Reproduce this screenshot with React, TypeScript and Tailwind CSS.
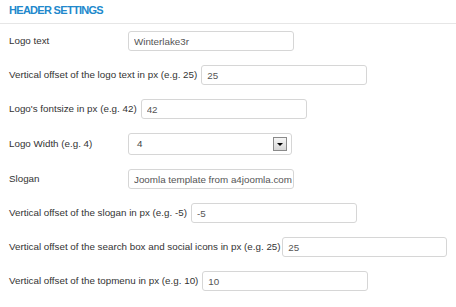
import { ReactNode } from 'react';

type RowProps = {
  label: string;
  tall?: boolean;
  children: ReactNode;
};

function Row({ label, tall, children }: RowProps) {
  return (
    <div className={tall ? 'flex items-center h-[36px]' : 'flex items-center h-[34px]'}>
      <label className="min-w-[115px] mr-[4px] whitespace-nowrap">{label}</label>
      {children}
    </div>
  );
}

function TextInput({ value }: { value: string }) {
  return (
    <input
      type="text"
      defaultValue={value}
      className="w-[166px] h-[20px] border border-[#d6d6d6] rounded-[3px] pl-[5px] pr-[1px] text-[9.8px] text-[#555] bg-white outline-none"
    />
  );
}

function SelectBox({ value }: { value: string }) {
  return (
    <div className="relative w-[164px] h-[22px] border border-[#d6d6d6] rounded-[3px] bg-white flex items-center pl-[8px] text-[9.8px] text-[#444]">
      {value}
      <div className="absolute right-[4px] top-[3px] w-[14px] h-[14px] border border-[#8a8a8a] bg-gradient-to-b from-[#f6f6f6] to-[#d6d6d6] flex items-center justify-center">
        <div className="w-0 h-0 border-l-[3px] border-r-[3px] border-t-[3px] border-l-transparent border-r-transparent border-t-black" />
      </div>
    </div>
  );
}

export default function App() {
  return (
    <div className="w-[456px] h-[307px] bg-white text-[9.8px] text-[#333] font-['Liberation_Sans',Arial,sans-serif]">
      <div className="h-[24px] border-b border-[#e6e6e6] px-[9px] pt-[4px]">
        <h2 className="text-[11px] font-bold text-[#2188cc] leading-[12px] tracking-[-0.7px]">HEADER SETTINGS</h2>
      </div>
      <div className="px-[9px]">
        <Row label="Logo text">
          <TextInput value="Winterlake3r" />
        </Row>
        <Row label="Vertical offset of the logo text in px (e.g. 25)">
          <TextInput value="25" />
        </Row>
        <Row label="Logo's fontsize in px (e.g. 42)">
          <TextInput value="42" />
        </Row>
        <Row label="Logo Width (e.g. 4)" tall>
          <SelectBox value="4" />
        </Row>
        <Row label="Slogan">
          <TextInput value="Joomla template from a4joomla.com" />
        </Row>
        <Row label="Vertical offset of the slogan in px (e.g. -5)">
          <TextInput value="-5" />
        </Row>
        <Row label="Vertical offset of the search box and social icons in px (e.g. 25)">
          <TextInput value="25" />
        </Row>
        <Row label="Vertical offset of the topmenu in px (e.g. 10)">
          <TextInput value="10" />
        </Row>
      </div>
    </div>
  );
}
